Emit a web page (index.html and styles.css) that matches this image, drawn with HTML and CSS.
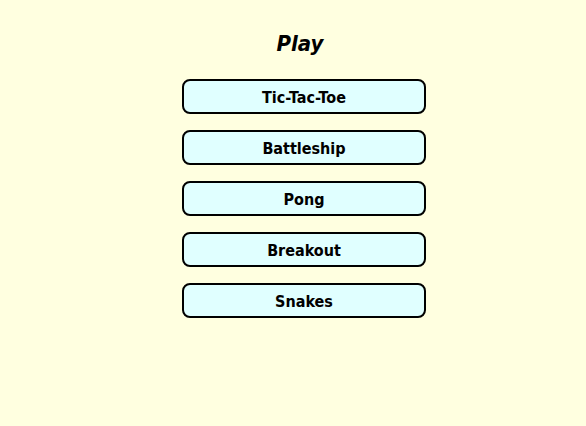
FILE: index.html
```html
<!DOCTYPE html>
<html lang="en">
  <head>
    <meta charset="utf-8" />
    <title>Play</title>
    <link rel="stylesheet" href="styles.css">
  </head>
  <body>
    <main class="menu">
      <h1 class="menu-title">Play</h1>
      <nav class="game-list">
        <button class="game-button">Tic-Tac-Toe</button>
        <button class="game-button">Battleship</button>
        <button class="game-button">Pong</button>
        <button class="game-button">Breakout</button>
        <button class="game-button">Snakes</button>
      </nav>
    </main>
  </body>
</html>
```

FILE: styles.css
```css
body,
h1,
button {
  margin: 0;
  padding: 0;
  font-family: "DejaVu Sans Condensed", "DejaVu Sans", Verdana, sans-serif;
  font-stretch: condensed;
  box-sizing: border-box;
}

body {
  background-color: lightyellow;
  min-height: 100vh;
}

.menu {
  display: flex;
  flex-direction: column;
  align-items: center;
  padding-top: 30px;
  padding-left: 22px;
}

.menu-title {
  font-size: 22px;
  font-style: italic;
  font-weight: bold;
  line-height: 28px;
  margin-right: 8px;
  margin-bottom: 21px;
}

.game-list {
  display: flex;
  flex-direction: column;
  gap: 16px;
}

.game-button {
  width: 244px;
  height: 35px;
  padding-top: 2px;
  background-color: lightcyan;
  border: 2px solid black;
  border-radius: 8px;
  font-size: 16px;
  font-weight: bold;
  color: black;
  cursor: pointer;
}
```
